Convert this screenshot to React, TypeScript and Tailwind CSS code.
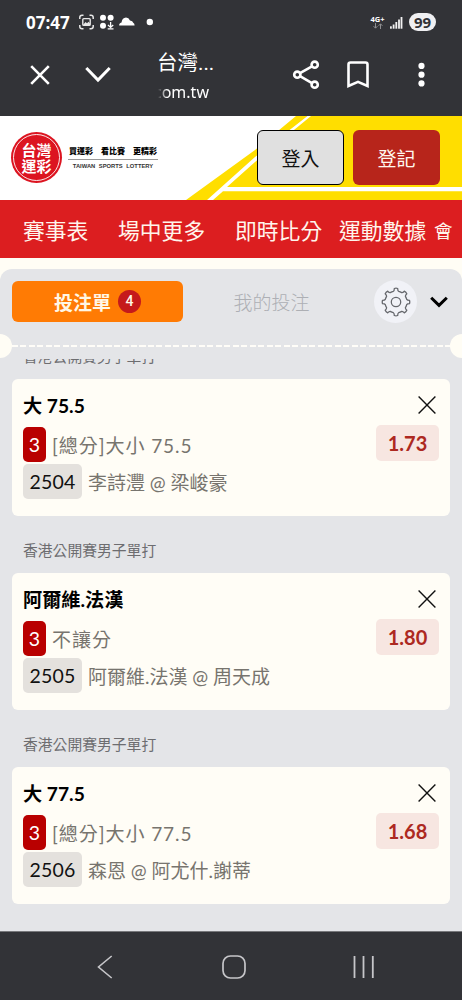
import React from "react";

interface Bet {
  id: string;
  league: string;
  pick: string;
  market: string;
  code: string;
  match: string;
  odds: string;
}

const bets: Bet[] = [
  { id: "b1", league: "香港公開賽男子單打", pick: "大 75.5", market: "[總分]大小 75.5", code: "2504", match: "李詩灃 @ 梁峻豪", odds: "1.73" },
  { id: "b2", league: "香港公開賽男子單打", pick: "阿爾維.法漢", market: "不讓分", code: "2505", match: "阿爾維.法漢 @ 周天成", odds: "1.80" },
  { id: "b3", league: "香港公開賽男子單打", pick: "大 77.5", market: "[總分]大小 77.5", code: "2506", match: "森恩 @ 阿尤什.謝蒂", odds: "1.68" },
];

const StatusBar = () => (
  <div className="flex h-11 items-center pl-[26px] pr-[26px] text-white">
    <span className="w-[45px] whitespace-nowrap font-['Open_Sans','Noto_Sans',sans-serif] text-[17px] font-bold leading-none">07:47</span>
    {/* Screenshot, apps, cloud, dot */}
    <svg className="ml-[7px]" width="78" height="18" viewBox="0 0 78 18" fill="none">
      <path d="M1.8 6V4.5Q1.8 2.3 4 2.3H5.5M11.5 2.3H13Q15.2 2.3 15.2 4.5V6M15.2 12V13.5Q15.2 15.7 13 15.7H11.5M5.5 15.7H4Q1.8 15.7 1.8 13.5V12" stroke="#e8e8e8" strokeWidth="1.5" />
      <rect x="4.8" y="5.6" width="7.4" height="6.8" rx="1" stroke="#e8e8e8" strokeWidth="1.4" />
      <path d="M5 12L7.5 9L9 10.2L10.5 8.7L12 10.5V12Z" fill="#e8e8e8" />
      <circle cx="25" cy="4.8" r="3" fill="#fff" />
      <circle cx="32.6" cy="4.8" r="3" fill="#fff" />
      <circle cx="25" cy="12.8" r="3" fill="#fff" />
      <path d="M32.6 9V14M30 12L32.6 14.4L35.2 12M29.7 15.8H35.5" stroke="#fff" strokeWidth="1.3" />
      <path d="M41.2 12.6Q40.8 10.2 43.5 9.4Q44.3 4.8 48 4.5Q50.8 4.7 52 7.4Q54.8 7.8 55.2 9.7Q56.600 10.400 56.600 12.600Z" fill="#fff" />
      <circle cx="71.8" cy="9" r="3.2" fill="#fff" />
    </svg>
    <div className="ml-auto flex items-center">
      <div className="flex w-[15px] flex-col items-center">
        <span className="whitespace-nowrap font-['Open_Sans',sans-serif] text-[7.5px] font-bold leading-[8px]">4G+</span>
        <svg width="10" height="6" viewBox="0 0 10 6" fill="none" stroke="#8f8f91" strokeWidth="1">
          <path d="M2.5 0V5M.6 3.2L2.5 5.2L4.4 3.2M7.5 6V1M5.6 2.8L7.5 .8L9.4 2.8" />
        </svg>
      </div>
      <svg className="ml-[5px]" width="13" height="13" viewBox="0 0 13 13" fill="#f2f2f2">
        <rect x="0" y="10.3" width="1.8" height="2.4" />
        <rect x="2.7" y="8.5" width="1.8" height="4.2" />
        <rect x="5.4" y="6" width="1.8" height="6.7" />
        <rect x="8.1" y="3.5" width="1.8" height="9.2" />
        <rect x="10.6" y="1" width="1.8" height="11.7" />
      </svg>
      <span className="ml-[6px] flex h-[18px] w-[27px] items-center justify-center rounded-full bg-[#f0f0f2] font-['Open_Sans',sans-serif] text-[15px] font-bold leading-none text-[#323337]">99</span>
    </div>
  </div>
);

const BrowserBar = () => (
  <div className="flex h-[72px] items-start pl-[30px] text-white">
    <svg className="mt-[21px]" width="20" height="20" viewBox="0 0 20 20" fill="none" stroke="currentColor" strokeWidth="2.6">
      <path d="M1.2 1.2L18.8 18.8M18.8 1.2L1.2 18.8" />
    </svg>
    <svg className="ml-[35px] mt-[22px]" width="26" height="17" viewBox="0 0 26 17" fill="none" stroke="currentColor" strokeWidth="3">
      <path d="M1.3 2L13 14L24.7 2" />
    </svg>
    <div className="ml-[46px] flex w-[62px] flex-col pt-[5px]">
      <span className="h-[29px] whitespace-nowrap font-[Roboto,'Noto_Sans_CJK_TC',sans-serif] text-[20.5px] leading-[29px]">台灣...</span>
      <span className="-ml-[3px] h-[28px] whitespace-nowrap font-['Noto_Sans',sans-serif] text-[16px] leading-[28px] [mask-image:linear-gradient(to_right,transparent_4px,black_13px)]">com.tw</span>
    </div>
    <svg className="ml-[73px] mt-4" width="28" height="30" viewBox="0 0 28 30" fill="none" stroke="currentColor" strokeWidth="2.6">
      <circle cx="5.3" cy="14.7" r="3.1" />
      <circle cx="22.7" cy="4.7" r="3.1" />
      <circle cx="22.7" cy="24.7" r="3.1" />
      <path d="M8 13.2L20 6.3M8 16.2L20 23.1" />
    </svg>
    <svg className="ml-[27px] mt-[17px]" width="22" height="28" viewBox="0 0 22 28" fill="none" stroke="currentColor" strokeWidth="2.6">
      <path d="M1.5 25V3.5Q1.5 1.5 3.5 1.5H18.5Q20.5 1.5 20.5 3.5V25L11 20.8Z" />
    </svg>
    <svg className="ml-[49px] mt-[18px]" width="8" height="26" viewBox="0 0 8 26" fill="currentColor">
      <circle cx="3.5" cy="3.9" r="3.1" />
      <circle cx="3.5" cy="12.7" r="3.1" />
      <circle cx="3.5" cy="21.4" r="3.1" />
    </svg>
  </div>
);

const SiteHeader = () => (
  <header className="relative h-[84px] overflow-hidden bg-white">
    {/* Yellow court lines */}
    <svg className="absolute inset-0" width="462" height="84" viewBox="0 0 462 84">
      <path d="M186 84L255 34L296 0H462V84Z" fill="#ffde00" />
      <path d="M207 84L255 41L307.5 0H311L255 46L227 71H462V75.3H223L213 84Z" fill="#fff" />
    </svg>
    <div className="relative flex h-full items-start pl-[11px]">
      <div className="mt-4 flex h-[51px] w-[51px] items-center justify-center rounded-full bg-[#dc1420] p-[2px]">
        <div className="flex h-full w-full flex-col items-center justify-center rounded-full border border-white/90 text-[15px] font-bold text-white">
          <span className="h-[16px] leading-[16px]">台灣</span>
          <span className="h-[16px] leading-[16px]">運彩</span>
        </div>
      </div>
      <div className="ml-[6px] mt-[27px] flex w-[90px] flex-col items-center text-black">
        <div className="flex w-[88px] justify-between whitespace-nowrap text-[8px] font-black leading-[15px]">
          <span>買運彩</span>
          <span>看比賽</span>
          <span>更精彩</span>
        </div>
        <div className="mt-px h-px w-full bg-[#999]" />
        <span className="mt-[2px] whitespace-nowrap font-['Liberation_Sans',sans-serif] text-[5.8px] font-bold leading-[8px] text-[#333] [word-spacing:2px]">TAIWAN SPORTS LOTTERY</span>
      </div>
      <button className="ml-[99px] mt-[14px] h-[55px] w-[87px] rounded-md border border-black bg-[#e0e0e0] pt-[2px] text-[19px] text-[#111]">登入</button>
      <button className="ml-[9px] mt-[14px] h-[55px] w-[87px] rounded-md bg-[#b7251b] pt-[2px] text-[19px] text-[#fff8ee]">登記</button>
    </div>
  </header>
);

const SiteNav = () => (
  <nav className="flex h-[58px] items-center overflow-hidden whitespace-nowrap bg-[#dc1e20] pl-[23px] pt-[3px] text-[21.8px] text-[#fff5ec]">
    <span className="w-[95px]">賽事表</span>
    <span className="w-[117px]">場中更多</span>
    <span className="w-[104px]">即時比分</span>
    <span className="w-[95px]">運動數據</span>
    <span className="text-[18.5px]">會</span>
  </nav>
);

const SlipTabs = () => (
  <div className="flex h-[76px] items-start pl-3 pt-3">
    <button className="flex h-[41px] w-[171px] items-center justify-center gap-[7px] rounded-md bg-[#ff7b04] text-[19px] font-bold text-[#fff7e6]">
      <span className="pt-px leading-[30px]">投注單</span>
      <span className="flex h-[23px] w-[23px] items-center justify-center rounded-full bg-[#c5191b] font-[Roboto,sans-serif] text-[14px] font-medium">4</span>
    </button>
    <button className="ml-[50px] h-[41px] w-[77px] whitespace-nowrap pt-[2px] text-[19px] font-light text-[#adafb4]">我的投注</button>
    <button className="-mt-[1px] ml-[64px] flex h-[43px] w-[43px] items-center justify-center rounded-full bg-[#f1f2f7]">
      <svg width="30" height="30" viewBox="0 0 30 30" fill="none" stroke="#66686d" strokeWidth="1.3" strokeLinejoin="round">
        <path d="M12.4 4.3Q13.3 3.8 13.3 1.5Q15 .9 16.7 1.5Q16.7 3.8 17.6 4.3Q19.3 4.7 20.7 5.6Q21.8 5.8 23.3 4.2Q25 5 25.8 6.7Q24.2 8.2 24.4 9.3Q25.3 10.7 25.7 12.4Q26.2 13.3 28.5 13.3Q29.1 15 28.5 16.7Q26.2 16.7 25.7 17.6Q25.3 19.3 24.4 20.7Q24.2 21.8 25.8 23.3Q25 25 23.3 25.8Q21.8 24.2 20.7 24.4Q19.3 25.3 17.6 25.7Q16.7 26.2 16.7 28.5Q15 29.1 13.3 28.5Q13.3 26.2 12.4 25.7Q10.7 25.3 9.3 24.4Q8.2 24.2 6.7 25.8Q5 25 4.2 23.3Q5.8 21.8 5.6 20.7Q4.7 19.3 4.3 17.6Q3.8 16.7 1.5 16.7Q.9 15 1.5 13.3Q3.8 13.3 4.3 12.4Q4.7 10.7 5.6 9.3Q5.8 8.2 4.2 6.7Q5 5 6.7 4.2Q8.2 5.8 9.3 5.6Q10.7 4.7 12.4 4.3Z" />
        <circle cx="15" cy="15" r="4.7" />
      </svg>
    </button>
    <svg className="ml-[13px] mt-[15px]" width="18" height="12" viewBox="0 0 18 12" fill="none" stroke="#000" strokeWidth="3">
      <path d="M1.2 1.7L9 9.3L16.8 1.7" />
    </svg>
  </div>
);

const Perforation = () => (
  <div className="flex h-[14px] items-center justify-between">
    <div className="-ml-3 h-6 w-6 shrink-0 rounded-full bg-[#fffdf5]" />
    <div className="h-[2px] flex-1 bg-[repeating-linear-gradient(to_right,#fffdf8_0_6px,transparent_6px_8.5px)]" />
    <div className="-mr-3 h-6 w-6 shrink-0 rounded-full bg-[#fffdf5]" />
  </div>
);

const BetCard: React.FC<{ bet: Bet }> = ({ bet }) => (
  <div>
    <div className="h-[57px] pl-[23px] pt-[22px] text-[14.8px] leading-[24px] text-[#6d6d70]">{bet.league}</div>
    <div className="mx-3 flex h-[137px] justify-between rounded-md bg-[#fffdf6] pl-[11px] pr-[11px] font-[Lato,'Noto_Sans_CJK_TC',sans-serif]">
      <div className="flex flex-col items-start whitespace-nowrap">
        <div className="mt-[13px] h-[28px] text-[19.2px] font-bold leading-[28px] text-black">{bet.pick}</div>
        <div className="mt-[7px] flex h-[35px] items-center">
          <span className="flex h-full w-[23px] items-center justify-center rounded-[5px] bg-[#b90000] text-[19.5px] text-white">3</span>
          <span className="ml-[6px] pt-[3px] text-[19px] leading-[34px] tracking-[0.95px] text-[#77746e]">{bet.market}</span>
        </div>
        <div className="mt-[2px] flex h-[35px] items-center">
          <span className="flex h-full w-[59px] items-center justify-center rounded-[5px] bg-[#e4e1dd] text-[19.5px] tracking-[0.2px] text-[#111]">{bet.code}</span>
          <span className="ml-[6px] pt-[3px] text-[19px] leading-[34px] text-[#77746e]">{bet.match}</span>
        </div>
      </div>
      <div className="flex flex-col items-end">
        <button className="mr-[3px] mt-[17px]" aria-label="移除">
          <svg width="18" height="18" viewBox="0 0 18 18" stroke="#111" strokeWidth="1.4">
            <path d="M.6 .6L17.4 17.4M17.4 .6L.6 17.4" />
          </svg>
        </button>
        <span className="mt-[11px] flex h-[36px] w-[63px] items-center justify-center rounded-[5px] bg-[#f7e6e1] text-[20px] font-bold text-[#ad2921]">{bet.odds}</span>
      </div>
    </div>
  </div>
);

const SystemNav = () => (
  <div className="flex h-[69px] items-center border-t border-[#77787b] bg-[#323337] pl-[97px] pt-px">
    <svg width="16" height="24" viewBox="0 0 16 24" fill="none" stroke="#c6c6c9" strokeWidth="1.6">
      <path d="M14.7 1L1.5 12L14.7 23" />
    </svg>
    <svg className="ml-[109px]" width="24" height="24" viewBox="0 0 24 24" fill="none" stroke="#c6c6c9" strokeWidth="1.7">
      <rect x="1" y="1" width="22" height="22" rx="7.5" />
    </svg>
    <svg className="ml-[107px]" width="22" height="22" viewBox="0 0 22 22" stroke="#c6c6c9" strokeWidth="1.8">
      <path d="M1.5 0V22M10.5 0V22M19.8 0V22" />
    </svg>
  </div>
);

const App: React.FC = () => {
  return (
    <div className="flex h-[1000px] w-[462px] flex-col overflow-hidden bg-[#fffdf5] font-['Noto_Sans_CJK_TC',sans-serif]">
      <div className="h-[116px] shrink-0 bg-[#323337]">
        <StatusBar />
        <BrowserBar />
      </div>
      <SiteHeader />
      <SiteNav />

      {/* Bet slip */}
      <main className="mt-[11px] flex h-[662px] flex-col overflow-hidden rounded-t-xl bg-[#e4e5e8]">
        <div className="h-[70px] shrink-0">
          <SlipTabs />
        </div>
        <Perforation />
        {/* Scrolled list, the first league label sits half under the header */}
        <div className="mt-[6px] min-h-0 flex-1 overflow-hidden">
          <div className="-mt-[37px]">
            {bets.map((bet) => (
              <BetCard key={bet.id} bet={bet} />
            ))}
          </div>
        </div>
      </main>
      <SystemNav />
    </div>
  );
};

export default App;
